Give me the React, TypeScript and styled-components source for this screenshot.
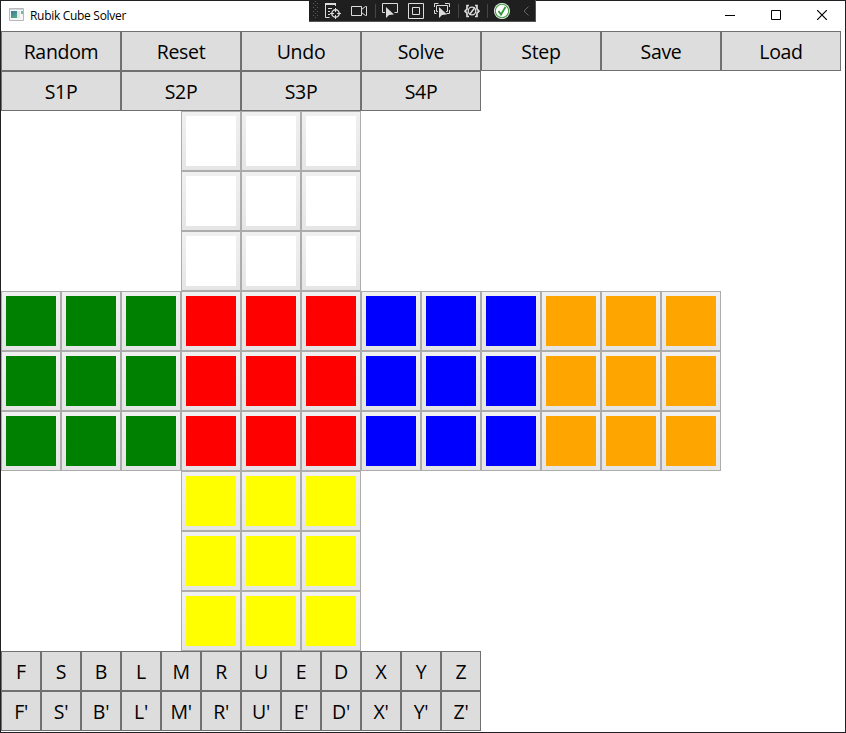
import React from "react";
import styled, { createGlobalStyle } from "styled-components";

const GlobalStyle = createGlobalStyle`
  * { box-sizing: border-box; }
  body { margin: 0; background: #fff; overflow: hidden; }
`;

const Window = styled.main`
  position: relative;
  width: 846px;
  height: 733px;
  border: 1px solid #232025;
  background: #fff;
  color: #000;
  font-family: "Open Sans", "Noto Sans", sans-serif;
`;

const TitleBar = styled.header`
  display: flex;
  align-items: center;
  height: 30px;
  padding-left: 8px;
`;

const AppIcon = styled.svg`
  display: block;
  width: 16px;
  height: 16px;
  margin-top: -2px;
`;

const Title = styled.h1`
  flex: 1;
  margin: 0 0 0 5px;
  font-size: 12px;
  font-weight: 400;
  line-height: 28px;
  letter-spacing: -0.3px;
`;

const WindowControls = styled.div`
  display: flex;
  height: 30px;
`;

const ControlButton = styled.button`
  display: flex;
  align-items: center;
  justify-content: center;
  width: 46px;
  padding: 0 0 2px;
  border: 0;
  background: transparent;
`;

const DebugBar = styled.div`
  position: absolute;
  top: -1px;
  left: 308px;
  width: 227px;
  height: 22px;
  background: #1f1f1f;
  border-bottom: 1px solid #555;
  border-right: 1px solid #555;
`;

const DebugIcons = styled.svg`
  display: block;
  width: 226px;
  height: 21px;
`;

const ButtonRow = styled.div`
  display: flex;
`;

const PushButton = styled.button<{ $width: number }>`
  width: ${(p) => p.$width}px;
  height: 40px;
  padding: 2px 0 0;
  border: 1px solid #707070;
  background: #ddd;
  color: #000;
  font-family: inherit;
  font-size: 19.5px;
  line-height: 36px;
  letter-spacing: -0.3px;
`;

const CubeNet = styled.section`
  display: grid;
  grid-template-columns: repeat(4, 180px);
  grid-template-rows: repeat(3, 180px);
`;

const Face = styled.div<{ $column: number; $row: number }>`
  display: grid;
  grid-template-columns: repeat(3, 60px);
  grid-template-rows: repeat(3, 60px);
  grid-column: ${(p) => p.$column};
  grid-row: ${(p) => p.$row};
`;

const Sticker = styled.button`
  padding: 4px;
  border: 1px solid #acacac;
  background: linear-gradient(#f0f0f0, #e5e5e5);
`;

const Swatch = styled.span<{ $color: string }>`
  display: block;
  width: 50px;
  height: 50px;
  background: ${(p) => p.$color};
`;

const actions = ["Random", "Reset", "Undo", "Solve", "Step", "Save", "Load"];
const stages = ["S1P", "S2P", "S3P", "S4P"];
const moves = ["F", "S", "B", "L", "M", "R", "U", "E", "D", "X", "Y", "Z"];
const faces = [
  { color: "#ffffff", column: 2, row: 1 },
  { color: "#008000", column: 1, row: 2 },
  { color: "#ff0000", column: 2, row: 2 },
  { color: "#0000ff", column: 3, row: 2 },
  { color: "#ffa500", column: 4, row: 2 },
  { color: "#ffff00", column: 2, row: 3 },
];

function Buttons({ labels, width }: { labels: string[]; width: number }) {
  return (
    <ButtonRow>
      {labels.map((label) => (
        <PushButton key={label} $width={width}>{label}</PushButton>
      ))}
    </ButtonRow>
  );
}

function DebugToolbar() {
  return (
    <DebugBar>
      <DebugIcons viewBox="0 0 226 21" fill="none" stroke="#dcdcdc">
        <g fill="#5c5c5c" stroke="none">
          {[3, 7, 11, 15].map((y) => (
            <React.Fragment key={y}>
              <rect x="4" y={y} width="1" height="1" />
              <rect x="8" y={y} width="1" height="1" />
              <rect x="6" y={y - 2} width="1" height="1" />
            </React.Fragment>
          ))}
          <rect x="6" y="17" width="1" height="1" />
        </g>
        {/* live visual tree */}
        <path d="M16 4h11" strokeWidth="2" />
        <path d="M16.5 4v13.5h4M26.5 4v2M19 8.5h4M19 11.5h2M19 14.5h2" />
        <circle cx="26.5" cy="13.5" r="3.7" strokeWidth="1.4" />
        <path d="M26.5 8v4M26.5 15v4M21 13.5h4M28 13.5h4" />
        {/* camera */}
        <path d="M42.500 6.500h10v9h-10zM52.500 9.500l4-3h1v9h-1l-4-3" />
        {/* separators */}
        <path d="M66.500 4v14M149.500 4v14M178.500 4v14" stroke="#464646" />
        {/* select element */}
        <path d="M76 12.500h-2.500v-9h15v9h-3" />
        <path d="M77 7v11l3-3 5-0.500z" fill="#dcdcdc" stroke="none" />
        {/* layout adorners */}
        <path d="M99.500 3.500h15v15h-15zM103.500 7.500h7v7h-7z" />
        {/* track focused element */}
        <path d="M125.500 7V3.500h4M136 3.500h4.500V7M125.500 10v3.500h2M137.500 13.500h3V10M129 11.500h-1.500v-6h11v6h-1.500" />
        <path d="M130 7v11l3-3 5-0.500z" fill="#dcdcdc" stroke="none" />
        {/* hot reload */}
        <path d="M160 5.500h-2v3.500l-2 2.200 2 2v3.300h2M166 5.500h2v3.500l2 2.200-2 2v3.300h-2" strokeWidth="1.700" />
        <circle cx="163" cy="11" r="3.800" strokeWidth="1.300" />
        <path d="M160.500 14.500l5.500-7" strokeWidth="1.500" />
        <circle cx="193" cy="11" r="8" fill="#fff" stroke="none" />
        <circle cx="193" cy="11" r="6.700" stroke="#45a046" strokeWidth="1.100" />
        <path d="M189.500 11l2.500 3.500 4.500-7.500" stroke="#32963a" strokeWidth="1.800" />
        <path d="M219.500 6.500l-4.500 4.500 4.500 4.500" stroke="#666" />
      </DebugIcons>
    </DebugBar>
  );
}

export default function App() {
  return (
    <>
      <GlobalStyle />
      <Window>
        <TitleBar>
          <AppIcon viewBox="0 0 16 16">
            <defs>
              <linearGradient id="screen" x2="0.5" y2="1">
                <stop stopColor="#3978a0" />
                <stop offset="1" stopColor="#55a685" />
              </linearGradient>
            </defs>
            <path d="M.5 1.500h14v12H.5z" fill="#f6f6f6" stroke="#b5b9bb" />
            <path d="M1 2.500h13" stroke="#d2d6d8" />
            <path d="M2 4h6v7H2z" fill="url(#screen)" />
            <path d="M8 4h3v7H8z" fill="#e1e6e9" />
            <path d="M12 4h2v3h-2z" fill="#78b69d" />
          </AppIcon>
          <Title>Rubik Cube Solver</Title>
          <WindowControls>
            <ControlButton aria-label="Minimize">
              <svg width="10" height="10"><path d="M0 5.500h10" stroke="#000" /></svg>
            </ControlButton>
            <ControlButton aria-label="Maximize">
              <svg width="10" height="10"><path d="M.5.5h9v9h-9z" fill="none" stroke="#000" /></svg>
            </ControlButton>
            <ControlButton aria-label="Close">
              <svg width="10" height="10"><path d="M0 0l10 10M10 0L0 10" stroke="#000" strokeWidth="1.200" /></svg>
            </ControlButton>
          </WindowControls>
        </TitleBar>
        <Buttons labels={actions} width={120} />
        <Buttons labels={stages} width={120} />
        <CubeNet>
          {faces.map((face) => (
            <Face key={face.color} $column={face.column} $row={face.row}>
              {Array.from({ length: 9 }, (_, i) => (
                <Sticker key={i}><Swatch $color={face.color} /></Sticker>
              ))}
            </Face>
          ))}
        </CubeNet>
        <Buttons labels={moves} width={40} />
        <Buttons labels={moves.map((move) => `${move}'`)} width={40} />
        <DebugToolbar />
      </Window>
    </>
  );
}
